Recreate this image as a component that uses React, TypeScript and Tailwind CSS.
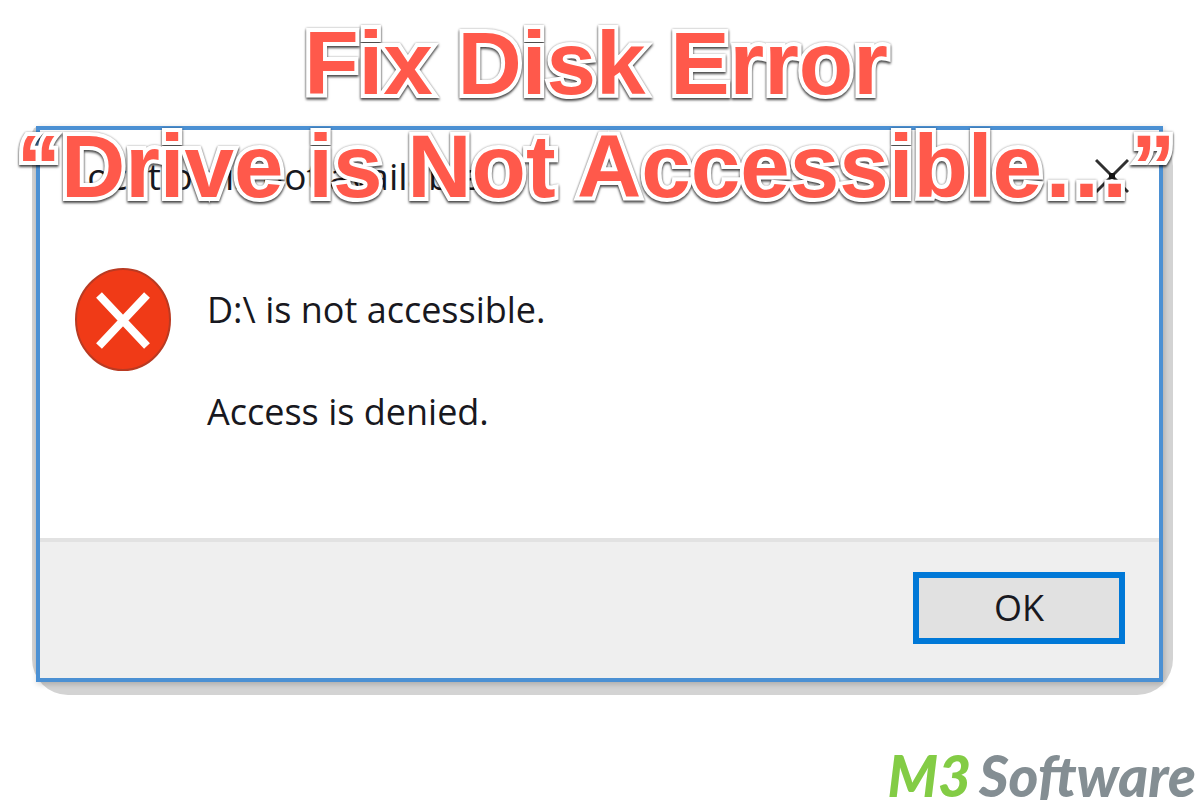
function ErrorIcon() {
  return (
    <svg viewBox="0 0 96 103" className="h-[103px] w-24 shrink-0" aria-hidden="true">
      <ellipse cx="48" cy="51.5" rx="47" ry="50.5" fill="#f03a17" stroke="#b93a22" strokeWidth="2" />
      <path d="M24 27 72 78M72 27 24 78" stroke="#ffffff" strokeWidth="8" fill="none" />
    </svg>
  );
}

function CloseIcon() {
  return (
    <svg viewBox="0 0 34 36" className="h-9 w-[34px]" aria-hidden="true">
      <path d="M1 2 33 34M33 2 1 34" stroke="#303030" strokeWidth="3" fill="none" />
      <rect x="14" y="15" width="6" height="6" fill="#151515" />
    </svg>
  );
}

function Headline() {
  return (
    <h1
      className={[
        'pointer-events-none absolute inset-x-0 top-3 pr-2 text-center whitespace-nowrap',
        "font-['Liberation_Sans',Arial,sans-serif] text-[89px] leading-[103px] font-bold text-[#ff594b]",
        '[-webkit-text-stroke:8px_white] [paint-order:stroke_fill] [stroke-linejoin:round]',
        '[filter:drop-shadow(0_0_1px_rgba(0,0,0,0.35))_drop-shadow(0_2px_1px_rgba(0,0,0,0.65))]',
      ].join(' ')}
    >
      Fix Disk Error
      <br />
      “Drive is Not Accessible…”
    </h1>
  );
}

function ErrorDialog() {
  return (
    <div className="mr-[27px] ml-8 rounded-tl-lg rounded-tr-[40px] rounded-b-[36px] bg-[#d3d3d3] pr-[10px] pb-[13px] pl-1">
      <section
        role="dialog"
        aria-labelledby="dialog-title"
        className="border-4 border-[#4b90d3] bg-white shadow-[1px_2px_6px_rgba(0,0,0,0.2)]"
      >
        <header className="flex h-[92px] items-center justify-between pr-[30px] pl-7">
          <h2 id="dialog-title" className="text-[37px] leading-[48px] text-[#181820]">
            Location is not available
          </h2>
          <button type="button" aria-label="Close">
            <CloseIcon />
          </button>
        </header>

        <div className="flex h-[316px] gap-9 pt-[46px] pl-[35px]">
          <ErrorIcon />
          <div className="flex flex-col gap-[54px] pt-[18px] text-4xl leading-[48px] text-[#181820]">
            <p>D:\ is not accessible.</p>
            <p>Access is denied.</p>
          </div>
        </div>

        <footer className="flex h-[140px] justify-end border-t-4 border-[#e2e2e2] bg-[#efefef] pt-[30px] pr-[34px]">
          <button
            type="button"
            className="h-[72px] w-[212px] border-[6px] border-[#0078d7] bg-[#e1e1e1] text-4xl leading-[48px] text-[#181820]"
          >
            OK
          </button>
        </footer>
      </section>
    </div>
  );
}

function Brand() {
  return (
    <div className="mt-[52px] flex justify-end gap-2 pr-1 font-['Lato',sans-serif] text-[57px] leading-[56px] font-black text-[#848e93] italic">
      <span className="text-[#83cc45]">M3</span>
      <span>Software</span>
    </div>
  );
}

export default function App() {
  return (
    <main className="relative bg-white pt-[126px] font-['Open_Sans','Noto_Sans',sans-serif]">
      <ErrorDialog />
      <Headline />
      <Brand />
    </main>
  );
}
